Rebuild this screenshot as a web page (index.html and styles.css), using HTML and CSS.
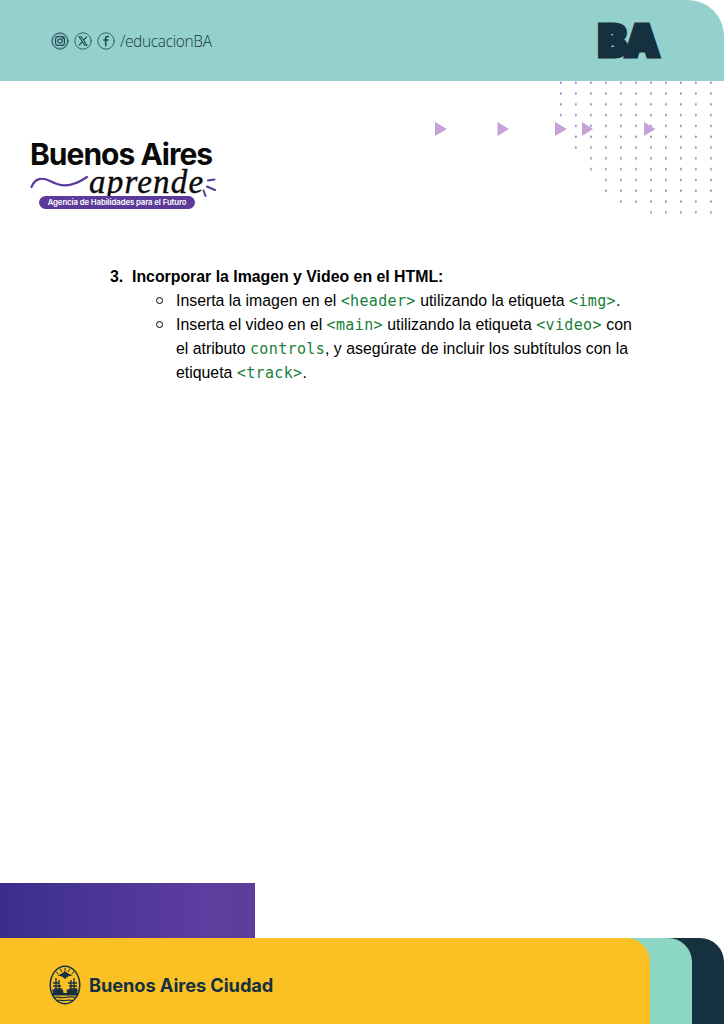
FILE: index.html
```html
<!DOCTYPE html>
<html lang="es">
<head>
<meta charset="utf-8">
<title>Buenos Aires aprende</title>
<link rel="stylesheet" href="styles.css">
</head>
<body>
<div class="page">
  <header class="top">
    <div class="social">
      <svg class="ico" viewBox="0 0 18 18"><circle cx="9" cy="9" r="8.2"/><circle cx="9" cy="9" r="7.300" stroke-width=".5"/><rect x="4.600" y="4.600" width="8.800" height="8.800" rx="2.400" stroke-width="1.200"/><circle cx="9" cy="9" r="2.200" stroke-width="1.200"/><circle cx="11.800" cy="6.200" r=".5" fill="#1d4653"/></svg>
      <svg class="ico" viewBox="0 0 18 18"><circle cx="9" cy="9" r="8.2"/><path d="M5 4.800h2.200l5.800 8.400h-2.200zM12.600 4.800 9.600 8.200M8.200 10 5.200 13.200" stroke-width="1.100"/></svg>
      <svg class="ico" viewBox="0 0 18 18"><circle cx="9" cy="9" r="8.2"/><path d="M11.300 4.400h-.9c-1.100 0-1.700.7-1.700 1.800v7.600M6.800 8h4.200" stroke-width="1.500"/></svg>
      <span class="handle">/educacionBA</span>
    </div>
    <span class="ba">BA</span>
  </header>

  <section class="hero">
    <div class="logo">
      <div class="logo-name">Buenos Aires</div>
      <div class="logo-script">
        <svg class="wave" viewBox="0 0 60 16"><path d="M1.500 13C5 4 12 3 20 7s18 9 37-4"/></svg>
        <span class="aprende">aprende</span>
        <svg class="marks" viewBox="0 0 17 22"><path d="M9 3.500 15.500 2.500M8 9.500 16 13M4.500 13.500 6.500 19"/></svg>
      </div>
      <div class="logo-pill">Agencia de Habilidades para el Futuro</div>
    </div>
    <svg class="decor" viewBox="0 0 289 135" aria-hidden="true">
      <defs>
        <pattern id="dots" x="125" y="0" width="15" height="10.800" patternUnits="userSpaceOnUse">
          <circle cx="0.700" cy="1.700" r="1.200" fill="#a884cb"/>
        </pattern>
      </defs>
      <path fill="url(#dots)" d="M122 0H289V135H212.700V128.300H182.700V117.500H167.700V95.900H152.700V74.300H137.700V41.900H122Z"/>
      <path class="tri" d="M0 41 12 48 0 55Z"/>
      <path class="tri" d="M62.500 41 74 48 62.500 55Z"/>
      <path class="tri" d="M120 41 132 48 120 55Z"/>
      <path class="tri" d="M147 41 158 48 147 55Z"/>
      <path class="tri" d="M209 41 220.500 48 209 55Z"/>
    </svg>
  </section>

  <main class="doc">
    <h2 class="step"><span class="num">3.</span>Incorporar la Imagen y Video en el HTML:</h2>
    <ul class="items">
      <li>Inserta la imagen en el <code>&lt;header&gt;</code> utilizando la etiqueta <code>&lt;img&gt;</code>.</li>
      <li>Inserta el video en el <code>&lt;main&gt;</code> utilizando la etiqueta <code>&lt;video&gt;</code> con el atributo <code>controls</code>, y asegúrate de incluir los subtítulos con la etiqueta <code>&lt;track&gt;</code>.</li>
    </ul>
  </main>

  <div class="band"></div>
  <footer class="foot">
    <div class="foot-mint">
      <div class="foot-yellow">
        <svg class="emblem" viewBox="0 0 32 40">
          <ellipse cx="16" cy="20" rx="15.500" ry="19.500" fill="#15303f"/>
          <ellipse cx="16" cy="20" rx="14" ry="18" fill="#fbc124"/>
          <path fill="#15303f" d="M8 10.500c3-1 6-2 8-4.500 2 2.500 5 3.500 8 4.500-3 0-6 1-8 3.500-2-2.500-5-3.500-8-3.500Z"/>
          <path stroke="#15303f" stroke-width="1" d="M16 3v3M11 3.500l2 3.500M21 3.500l-2 3.500M6.500 6.500l3 2.500M25.500 6.500l-3 2.500"/>
          <path stroke="#15303f" stroke-width="1.300" d="M7 13v13M10 15v11M4 18h6M4 21h8M5 24h8M22 15v11M25 13v13M19 18h9M20 21h8M20 24h8"/>
          <path fill="#15303f" d="M3 24.500h11l.5 3.500H4ZM17.500 24.500H29L28 28H18Z"/>
          <path fill="#15303f" d="M2.500 28h27L28 30.500H4Z"/>
          <path fill="none" stroke="#15303f" stroke-width="1.200" d="M5 32.500c4-1.500 7 1 11 0s7-1 11 0M8 35.500c3-1 5 .6 8 0s5-.6 8 0"/>
        </svg>
        <span class="city">Buenos Aires Ciudad</span>
      </div>
    </div>
  </footer>
</div>
</body>
</html>
```
FILE: styles.css
```css
* { box-sizing: border-box; }
html, body { margin: 0; padding: 0; background: #fff; }
.page {
  width: 724px;
  height: 1024px;
  display: flex;
  flex-direction: column;
  overflow: hidden;
  font-family: "Liberation Sans", Arial, sans-serif;
  color: #000;
}

/* Header */
.top {
  height: 81px;
  flex: none;
  background: #95d1cc;
  border-top-right-radius: 36px;
  display: flex;
  justify-content: space-between;
  align-items: flex-start;
  padding: 23px 66px 0 51px;
}
.social { display: flex; align-items: center; gap: 5px; height: 36px; }
.ico {
  width: 18px;
  height: 18px;
  fill: none;
  stroke: #1d4653;
  stroke-width: .8;
  stroke-linecap: round;
  stroke-linejoin: round;
}
.handle {
  font-family: "Open Sans", sans-serif;
  font-weight: 300;
  font-size: 15.500px;
  letter-spacing: -.35px;
  color: #17363f;
}
.ba {
  font-family: Inter, sans-serif;
  font-weight: 900;
  font-size: 42px;
  line-height: 36px;
  letter-spacing: -1px;
  color: #15303f;
  -webkit-text-stroke: 5px #15303f;
}

/* Hero */
.hero {
  height: 172px;
  flex: none;
  display: flex;
  justify-content: space-between;
  align-items: flex-start;
  padding: 0 0 0 30px;
}
.logo { width: 190px; margin-top: 58px; display: flex; flex-direction: column; }
.logo-name {
  font-family: Inter, sans-serif;
  font-weight: 700;
  font-size: 30px;
  line-height: 30px;
  letter-spacing: -1px;
  white-space: nowrap;
  color: #0a0a0a;
}
.logo-script { display: flex; align-items: center; height: 26px; }
.wave { width: 60px; height: 16px; flex: none; fill: none; stroke: #5b3a9a; stroke-width: 2.200; stroke-linecap: round; }
.aprende {
  font-family: "Liberation Serif", serif;
  font-style: italic;
  font-size: 33px;
  line-height: 26px;
  letter-spacing: 1.200px;
  color: #0a0a0a;
  -webkit-text-stroke: .4px #0a0a0a;
  margin-left: -1px;
}
.marks { width: 17px; height: 22px; flex: none; margin: 12px 0 0 -5px; fill: none; stroke: #5b3a9a; stroke-width: 2; stroke-linecap: round; }
.logo-pill {
  width: 156px;
  height: 13px;
  margin: 1px 0 0 9px;
  border-radius: 7px;
  background: #5b3a9a;
  color: #fff;
  font-family: Inter, sans-serif;
  font-weight: 600;
  font-size: 7.800px;
  line-height: 13px;
  letter-spacing: -.1px;
  text-align: center;
  white-space: nowrap;
}
.decor { width: 289px; height: 135px; flex: none; }
.decor .tri { fill: #c6a2d8; }

/* Body text */
.doc { flex: 1; padding: 11.500px 0 0 110px; font-size: 15.850px; line-height: 24px; }
.step { margin: 0; font-size: 15.850px; font-weight: 700; line-height: 24px; }
.num { display: inline-block; width: 22px; }
.items { margin: 0; padding: 0 78px 0 66px; list-style: none; }
.items li::before {
  content: "";
  display: inline-block;
  box-sizing: border-box;
  width: 7px;
  height: 7px;
  margin: 0 13px 2px -20px;
  border: 1px solid #000;
  border-radius: 50%;
}
code {
  font-family: "DejaVu Sans Mono", monospace;
  font-size: 15px;
  letter-spacing: .35px;
  color: #188038;
}

/* Footer */
.band {
  width: 255px;
  height: 55px;
  flex: none;
  background: linear-gradient(90deg, #3a2e8b 0%, #5e3d9f 80%, #5c3e9c 100%);
}
.foot { height: 86px; flex: none; background: #15303f; border-top-right-radius: 24px; padding-right: 32px; }
.foot-mint { height: 100%; background: #8cd6c4; border-top-right-radius: 24px; padding-right: 42px; }
.foot-yellow {
  height: 100%;
  background: #fbc124;
  border-top-right-radius: 24px;
  display: flex;
  align-items: center;
  gap: 8px;
  padding: 7px 0 0 49px;
}
.emblem { width: 32px; height: 40px; flex: none; }
.city {
  font-family: Inter, sans-serif;
  font-weight: 700;
  font-size: 18.300px;
  letter-spacing: -.1px;
  color: #15303f;
  white-space: nowrap;
}
```
